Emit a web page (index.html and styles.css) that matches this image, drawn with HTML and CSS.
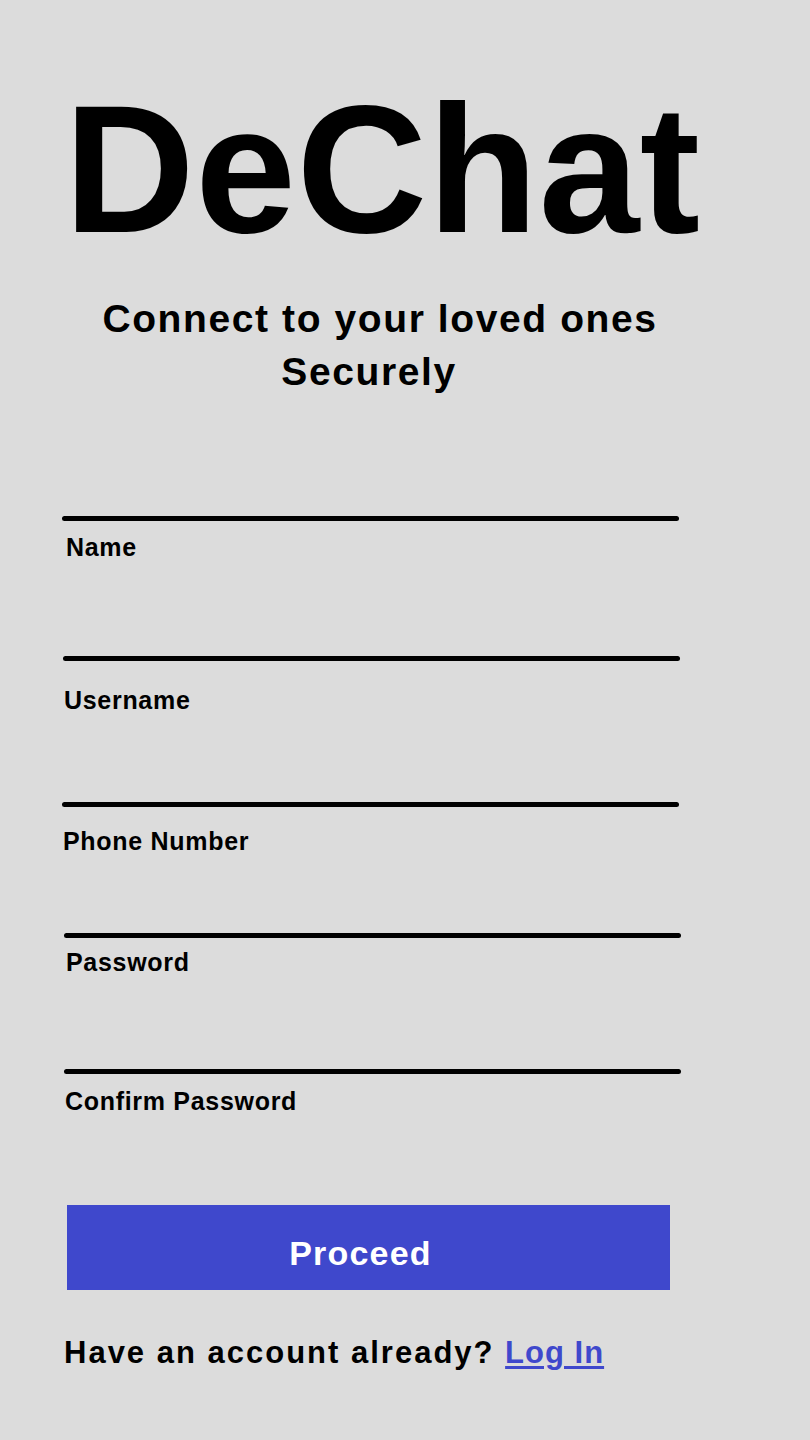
FILE: index.html
```html
<!DOCTYPE html>
<html lang="en">
<head>
<meta charset="utf-8">
<title>DeChat - Sign Up</title>
<link rel="stylesheet" href="styles.css">
</head>
<body>
<main class="screen">
  <h1 class="brand">DeChat</h1>
  <p class="tagline">
    <span class="tagline-line">Connect to your loved ones</span>
    <span class="tagline-line tagline-line-short">Securely</span>
  </p>
  <form class="signup">
    <div class="field field-name">
      <div class="rule"></div>
      <label class="label" for="name">Name</label>
      <input class="input" id="name" type="text">
    </div>
    <div class="field field-username">
      <div class="rule"></div>
      <label class="label" for="username">Username</label>
      <input class="input" id="username" type="text">
    </div>
    <div class="field field-phone">
      <div class="rule"></div>
      <label class="label" for="phone">Phone Number</label>
      <input class="input" id="phone" type="tel">
    </div>
    <div class="field field-password">
      <div class="rule"></div>
      <label class="label" for="password">Password</label>
      <input class="input" id="password" type="password">
    </div>
    <div class="field field-confirm">
      <div class="rule"></div>
      <label class="label" for="confirm">Confirm Password</label>
      <input class="input" id="confirm" type="password">
    </div>
    <button class="proceed" type="button">Proceed</button>
  </form>
  <p class="login">Have an account already? <a class="login-link" href="#">Log In</a></p>
</main>
</body>
</html>
```
FILE: styles.css
```css
html, body {
  margin: 0;
  padding: 0;
  background: #dcdcdc;
}

body {
  font-family: "Liberation Sans", Arial, sans-serif;
  color: #000;
}

.screen {
  width: 810px;
  min-height: 1440px;
  padding: 79px 0 0 62px;
  box-sizing: border-box;
}

.brand {
  margin: 0 0 0 2px;
  font-size: 181px;
  line-height: 181px;
  font-weight: 700;
  letter-spacing: 0.5px;
}

.tagline {
  margin: 32px 0 0 -62px;
  width: 760px;
  text-align: center;
  font-size: 39px;
  line-height: 53px;
  font-weight: 700;
  letter-spacing: 1.6px;
}

.tagline-line {
  display: block;
}

.tagline-line-short {
  padding-right: 22px;
}

.signup {
  margin-top: 118px;
  display: flex;
  flex-direction: column;
}

.field {
  display: flex;
  flex-direction: column;
}

.rule {
  width: 617px;
  height: 5px;
  border-radius: 3px;
  background: #000;
}

.label {
  font-size: 25px;
  line-height: 28px;
  font-weight: 700;
  letter-spacing: 0.7px;
  padding-left: 4px;
}

.input {
  display: block;
  border: 0;
  padding: 0;
  margin: 0;
  width: 617px;
  background: transparent;
  font: inherit;
  outline: none;
}

.field-name .label { margin-top: 12px; }
.field-name .input { height: 95px; }

.field-username .rule { margin-left: 1px; }
.field-username .label { margin-top: 25px; padding-left: 2px; }
.field-username .input { height: 88px; }

.field-phone .label { margin-top: 20px; padding-left: 1px; }
.field-phone .input { height: 78px; }

.field-password .rule { margin-left: 2px; }
.field-password .label { margin-top: 10px; }
.field-password .input { height: 93px; }

.field-confirm .rule { margin-left: 2px; }
.field-confirm .label { margin-top: 13px; padding-left: 3px; }
.field-confirm .input { height: 90px; }

.proceed {
  margin: 0 0 0 5px;
  width: 603px;
  height: 85px;
  border: 0;
  padding: 12px 16px 0 0;
  background: #3f48cc;
  color: #fff;
  font-family: "Liberation Sans", Arial, sans-serif;
  font-size: 34px;
  font-weight: 700;
  letter-spacing: 1.2px;
  cursor: pointer;
}

.login {
  margin: 45px 0 0 2px;
  font-size: 31px;
  line-height: 36px;
  font-weight: 700;
  letter-spacing: 2px;
}

.login-link {
  color: #3f48cc;
  text-decoration: underline;
  text-underline-offset: 3px;
  letter-spacing: 1px;
}
```
